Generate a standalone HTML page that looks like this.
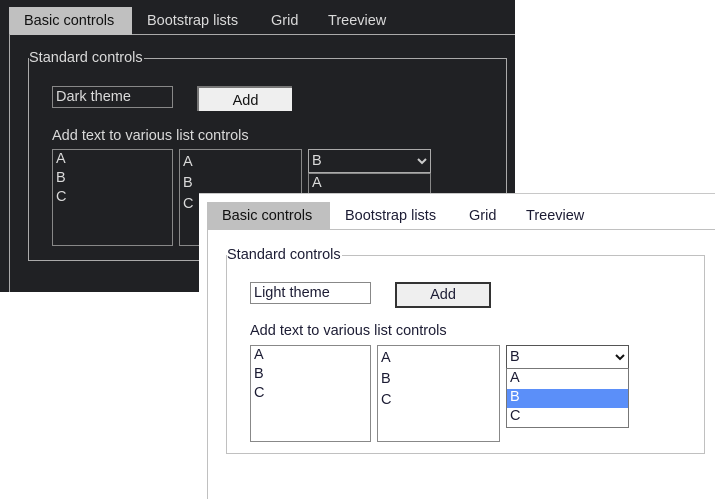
<!DOCTYPE html>
<html><head><meta charset="utf-8"><style>
*{margin:0;padding:0;box-sizing:border-box}
body{width:715px;height:492px;background:#fff;position:relative;overflow:hidden;font-family:"Liberation Sans",sans-serif;font-size:14.5px}
.a{position:absolute}
.dark{left:0;top:0;width:515px;height:292px;background:#202124;color:#dadada}
.light{left:199px;top:193px;width:516px;height:299px;background:#fff;color:#1b1b33;border-top:1px solid #c8c8c8}
.tab{position:absolute;top:0;height:28px;line-height:28px}
.act{background:#c0c0c0;color:#111;padding:0 15px}
.box{position:absolute;border:1px solid #888}
.opt{position:absolute;left:3px}
</style></head><body>

<div class="a dark">
  <div class="tab act" style="left:9px;top:7px;width:123px">Basic controls</div>
  <div class="tab" style="left:147px;top:7px">Bootstrap lists</div>
  <div class="tab" style="left:271px;top:7px">Grid</div>
  <div class="tab" style="left:328px;top:7px">Treeview</div>
  <div class="a" style="left:132px;top:34px;width:383px;height:1px;background:#aaa"></div>
  <div class="a" style="left:9px;top:34px;width:1px;height:258px;background:#aaa"></div>
  <div class="box" style="left:28px;top:58px;width:479px;height:203px;border-color:#aaa"></div>
  <div class="a" style="left:29px;top:50px;background:#202124;padding-right:1px">Standard controls</div>
  <div class="box" style="left:52px;top:86px;width:121px;height:22px;padding-left:3px;line-height:20px">Dark theme</div>
  <div class="a" style="left:197px;top:86px;width:95px;height:25px;background:#efefef;color:#111;text-align:center;line-height:26px;border-left:2px solid #777;border-top:2px solid #777">Add</div>
  <div class="a" style="left:52px;top:128px">Add text to various list controls</div>
  <div class="box" style="left:52px;top:149px;width:121px;height:97px">
    <div class="opt" style="top:1px">A</div><div class="opt" style="top:20px">B</div><div class="opt" style="top:39px">C</div></div>
  <div class="box" style="left:179px;top:149px;width:123px;height:97px">
    <div class="opt" style="top:4px">A</div><div class="opt" style="top:25px">B</div><div class="opt" style="top:46px">C</div></div>
  <div class="box" style="left:308px;top:149px;width:123px;height:24px;border-color:#aaa">
    <div class="opt" style="top:3px">B</div>
    <svg class="a" style="left:108px;top:8px" width="10" height="7"><path d="M1 1L5 5L9 1" stroke="#ccc" stroke-width="2" fill="none"/></svg></div>
  <div class="box" style="left:308px;top:173px;width:123px;height:30px;border-color:#888">
    <div class="opt" style="top:1px">A</div></div>
</div>

<div class="a light">
  <div class="tab act" style="left:8px;top:8px;width:123px">Basic controls</div>
  <div class="tab" style="left:146px;top:8px">Bootstrap lists</div>
  <div class="tab" style="left:270px;top:8px">Grid</div>
  <div class="tab" style="left:327px;top:8px">Treeview</div>
  <div class="a" style="left:131px;top:35px;width:385px;height:1px;background:#c0c0c0"></div>
  <div class="a" style="left:8px;top:35px;width:1px;height:270px;background:#c0c0c0"></div>
  <div class="box" style="left:27px;top:61px;width:479px;height:199px;border-color:#c0c0c0"></div>
  <div class="a" style="left:28px;top:53px;background:#fff;padding-right:1px">Standard controls</div>
  <div class="box" style="left:51px;top:88px;width:121px;height:22px;padding-left:3px;line-height:20px">Light theme</div>
  <div class="a" style="left:196px;top:88px;width:96px;height:26px;background:#efefef;text-align:center;line-height:22px;border:2px solid #333">Add</div>
  <div class="a" style="left:51px;top:129px">Add text to various list controls</div>
  <div class="box" style="left:51px;top:151px;width:121px;height:97px">
    <div class="opt" style="top:1px">A</div><div class="opt" style="top:20px">B</div><div class="opt" style="top:39px">C</div></div>
  <div class="box" style="left:178px;top:151px;width:123px;height:97px">
    <div class="opt" style="top:4px">A</div><div class="opt" style="top:25px">B</div><div class="opt" style="top:46px">C</div></div>
  <div class="box" style="left:307px;top:151px;width:123px;height:24px;border-color:#555">
    <div class="opt" style="top:3px">B</div>
    <svg class="a" style="left:108px;top:8px" width="10" height="7"><path d="M1 1L5 5L9 1" stroke="#111" stroke-width="2" fill="none"/></svg></div>
  <div class="box" style="left:307px;top:174px;width:123px;height:60px;border-color:#777">
    <div class="opt" style="top:1px">A</div>
    <div class="a" style="left:0;top:20px;width:121px;height:19px;background:#5b8ff9;color:#fff;padding-left:3px">B</div>
    <div class="opt" style="top:39px">C</div></div>
</div>
</body></html>
